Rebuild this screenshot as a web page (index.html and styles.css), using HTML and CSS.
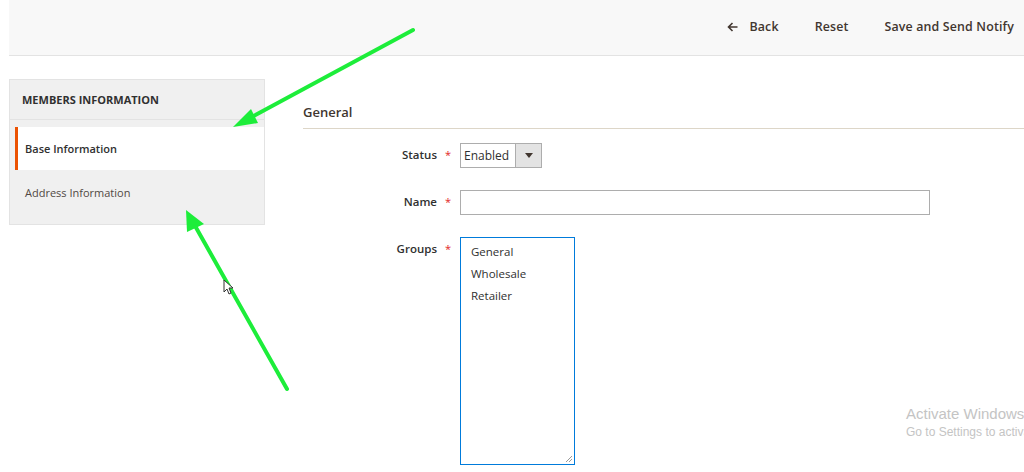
FILE: index.html
```html
<!DOCTYPE html>
<html>
<head>
<meta charset="utf-8">
<link rel="stylesheet" href="styles.css">
</head>
<body>
<div class="page">
  <header class="topbar">
    <div class="actions">
      <a class="action back"><svg class="arrow" width="11" height="10" viewBox="0 0 11 10"><path d="M10.5 5H1.5M5.5 1L1.5 5L5.5 9" fill="none" stroke="#41362f" stroke-width="1.6"/></svg>Back</a>
      <a class="action">Reset</a>
      <a class="action">Save and Send Notify</a>
    </div>
  </header>
  <main class="main">
    <aside class="sidebar">
      <div class="side-title">MEMBERS INFORMATION</div>
      <div class="side-gap"></div>
      <div class="side-item active">Base Information</div>
      <div class="side-item">Address Information</div>
    </aside>
    <section class="content">
      <h2 class="fieldset-title">General</h2>
      <div class="field">
        <label class="label">Status</label><span class="req">*</span>
        <div class="select"><span class="select-value">Enabled</span><span class="select-btn"><svg width="8" height="5" viewBox="0 0 8 5"><path d="M0 0h8L4 5z" fill="#41362f"/></svg></span></div>
      </div>
      <div class="field">
        <label class="label">Name</label><span class="req">*</span>
        <div class="input"></div>
      </div>
      <div class="field">
        <label class="label">Groups</label><span class="req">*</span>
        <div class="multi">
          <div class="opt">General</div>
          <div class="opt">Wholesale</div>
          <div class="opt">Retailer</div>
          <svg class="grip" width="9" height="9" viewBox="0 0 9 9"><path d="M8 2L2 8M8 5L5 8" stroke="#999" stroke-width="1"/></svg>
        </div>
      </div>
    </section>
  </main>
</div>
<div class="watermark">
  <div class="wm1">Activate Windows</div>
  <div class="wm2">Go to Settings to activate Windows.</div>
</div>
<svg class="overlay" width="1024" height="472" viewBox="0 0 1024 472">
  <line x1="413" y1="30" x2="248" y2="119" stroke="#1ded3a" stroke-width="4" stroke-linecap="round"/>
  <polygon points="233,127 251,109 258,123" fill="#1ded3a"/>
  <line x1="287" y1="389" x2="194" y2="224" stroke="#1ded3a" stroke-width="4" stroke-linecap="round"/>
  <polygon points="186,210 187,232 204,224" fill="#1ded3a"/>
  <path d="M224 280 L224 292 L227 289 L229 294 L231 293 L229 288 L233 288 Z" fill="#fff" stroke="#333" stroke-width="1"/>
</svg>
</body>
</html>
```
FILE: styles.css
```css
* { box-sizing: border-box; }
html, body { margin: 0; padding: 0; background: #fff; }
body { font-family: "Open Sans", "Noto Sans", sans-serif; color: #303030; width: 1024px; height: 472px; overflow: hidden; position: relative; }
.page { padding-left: 9px; }
.topbar { height: 56px; background: #f8f8f8; border-bottom: 1px solid #e3e3e3; display: flex; justify-content: flex-end; align-items: center; padding-bottom: 2px; }
.actions { display: flex; align-items: center; gap: 36px; padding-right: 10px; }
.action { font-size: 12.4px; font-weight: 600; color: #41362f; letter-spacing: 0.15px; display: flex; align-items: center; }
.back .arrow { margin-right: 11px; }
.main { display: flex; align-items: flex-start; }
.sidebar { width: 256px; margin-top: 23px; border: 1px solid #e3e3e3; background: #f0f0f0; }
.side-title { height: 40px; display: flex; align-items: center; padding-left: 12px; font-size: 11px; font-weight: 700; color: #303030; border-bottom: 1px solid #e3e3e3; }
.side-gap { height: 7px; }
.side-item { font-size: 11px; padding-left: 15px; display: flex; align-items: center; }
.side-item.active { height: 43px; background: #fff; margin-left: 5px; border-left: 3px solid #eb5202; padding-left: 7px; font-weight: 600; color: #303030; }
.side-item:not(.active) { height: 54px; color: #514943; padding-bottom: 10px; }
.content { flex: 1; margin-left: 38px; margin-top: 47px; }
.fieldset-title { margin: 0; font-size: 13px; font-weight: 600; color: #41362f; padding-bottom: 7px; border-bottom: 1px solid #ddd6c8; line-height: 18px; }
.field { display: flex; align-items: flex-start; margin-top: 14px; }
.field + .field { margin-top: 22px; }
.field + .field + .field { margin-top: 22px; }
.label { width: 134px; text-align: right; font-size: 11.5px; font-weight: 600; color: #303030; line-height: 24px; }
.req { width: 23px; text-align: left; padding-left: 8px; color: #e22626; font-size: 11px; line-height: 24px; }
.select { width: 82px; height: 25px; border: 1px solid #adadad; display: flex; background: #fff; }
.select-value { flex: 1; font-size: 12px; color: #303030; padding-left: 3px; line-height: 23px; }
.select-btn { width: 26px; background: #e3e3e3; border-left: 1px solid #adadad; display: flex; align-items: center; justify-content: center; }
.input { width: 470px; height: 25px; border: 1px solid #adadad; background: #fff; }
.multi { position: relative; width: 115px; height: 228px; border: 1px solid #007bdb; background: #fff; padding: 3px 0 0 10px; }
.opt { font-size: 11.5px; color: #303030; line-height: 22px; }
.grip { position: absolute; right: 1px; bottom: 1px; }
.watermark { position: absolute; left: 906px; top: 404px; color: #c4c4c4; white-space: nowrap; font-family: "Liberation Sans", "Noto Sans", sans-serif; }
.wm1 { font-size: 15px; line-height: 19px; }
.wm2 { font-size: 12px; line-height: 18px; }
.overlay { position: absolute; left: 0; top: 0; pointer-events: none; }
```
